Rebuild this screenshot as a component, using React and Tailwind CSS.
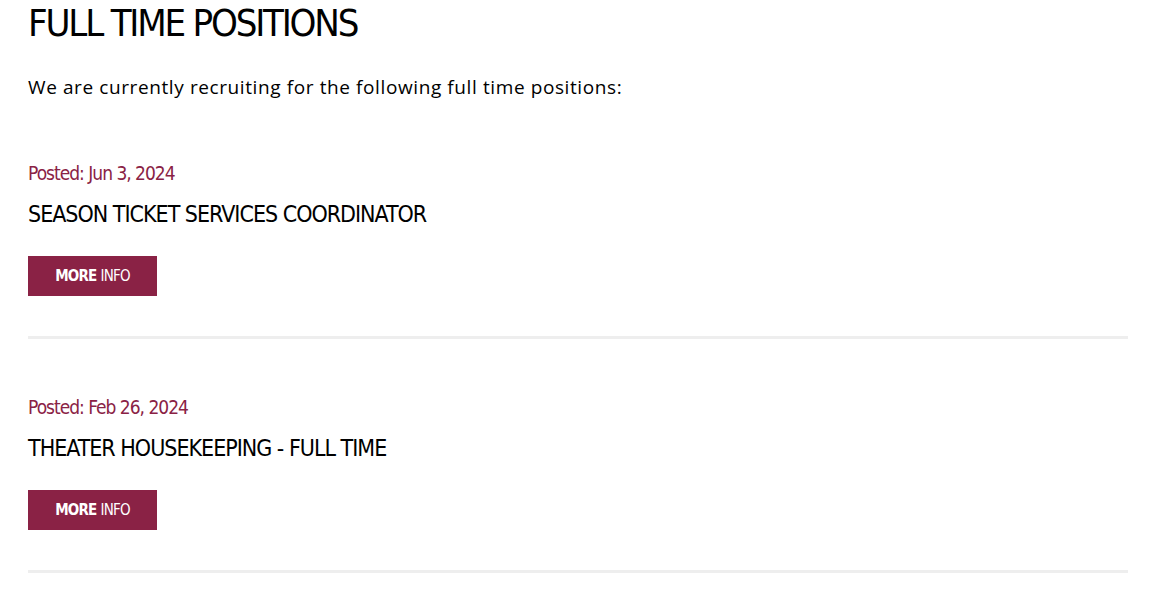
import React from 'react';

const condensed = { fontFamily: '"DejaVu Sans Condensed", "DejaVu Sans", sans-serif' };

const jobs = [
  { posted: 'Posted: Jun 3, 2024', title: 'SEASON TICKET SERVICES COORDINATOR' },
  { posted: 'Posted: Feb 26, 2024', title: 'THEATER HOUSEKEEPING - FULL TIME' },
];

const App = () => {
  return (
    <div className="min-h-screen bg-white">
      <div className="w-[1100px] ml-[28px]">
        <h1 className="text-[38px] leading-[46px] tracking-[-2.2px] text-black font-normal" style={condensed}>
          FULL TIME POSITIONS
        </h1>
        <p
          className="mt-[27px] text-[19px] leading-[28px] tracking-[0.6px] text-black"
          style={{ fontFamily: '"Open Sans", sans-serif' }}
        >
          We are currently recruiting for the following full time positions:
        </p>

        <div className="mt-[58px]">
          {jobs.map((job, i) => (
            <div key={i} className={i > 0 ? 'pt-[54px]' : ''}>
              <div className="text-[19px] leading-[28px] tracking-[-1px] text-[#8a2245]" style={condensed}>
                {job.posted}
              </div>
              <h2 className="mt-[11px] text-[23px] leading-[32px] tracking-[-1px] text-black" style={condensed}>
                {job.title}
              </h2>
              <a
                href="#"
                className="mt-[26px] flex items-center justify-center w-[129px] h-[40px] bg-[#8a2245] text-white text-[15px] tracking-[-0.8px]"
                style={condensed}
              >
                <span className="font-bold">MORE</span>
                <span className="ml-[4px]">INFO</span>
              </a>
              <div className="mt-[40px] h-[3px] bg-[#eeeeee]" />
            </div>
          ))}
        </div>
      </div>
    </div>
  );
};

export default App;
